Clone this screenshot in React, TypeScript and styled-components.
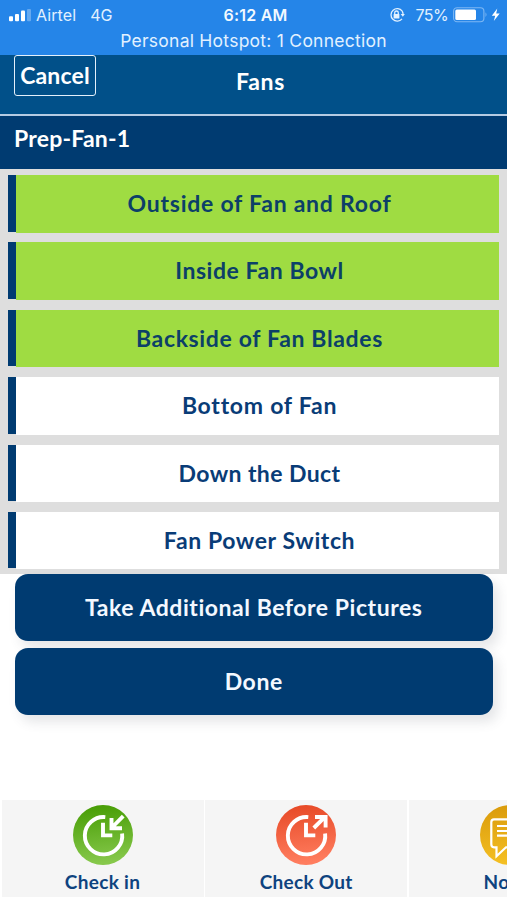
import React from "react";
import styled, { createGlobalStyle } from "styled-components";

const NAVY = "#003b71";

const GlobalStyle = createGlobalStyle`
  * { box-sizing: border-box; }
  html, body { margin: 0; background: #fff; overflow: hidden; }
`;

const Screen = styled.div`
  width: 507px;
  height: 900px;
  overflow: hidden;
  display: flex;
  flex-direction: column;
  background: #fff;
  font-family: Lato, "Open Sans", sans-serif;
  font-weight: 700;
`;

const StatusBar = styled.div`
  height: 54.5px;
  flex: none;
  background: #2585e8;
  color: #e2f1ff;
  font-family: Inter, "Liberation Sans", sans-serif;
  font-weight: 400;
  white-space: nowrap;
`;

const StatusRow = styled.div`
  height: 30px;
  display: grid;
  grid-template-columns: 1fr auto 1fr;
  align-items: center;
  padding: 0 5px 0 9px;
  font-size: 16px;
  line-height: 20px;
`;

const Carrier = styled.div`
  display: flex;
  align-items: center;
`;

const CarrierName = styled.span`
  margin: 0 14px 0 5px;
  letter-spacing: 0.1px;
`;

const Clock = styled.div`
  font-weight: 600;
  color: #f2f9ff;
  letter-spacing: 0.2px;
`;

const Power = styled.div`
  display: flex;
  align-items: center;
  justify-content: flex-end;
`;

const Percent = styled.span`
  margin: 0 5px 0 10px;
  letter-spacing: -0.6px;
`;

const Hotspot = styled.div`
  height: 22px;
  line-height: 22px;
  text-align: center;
  font-size: 17.5px;
  letter-spacing: 0.25px;
`;

const Header = styled.header`
  height: 61.5px;
  flex: none;
  display: grid;
  grid-template-columns: 1fr auto 1fr;
  align-items: start;
  padding: 0 0 0 14px;
  background: #015089;
  border-bottom: 2px solid #b5cbe3;
  color: #fff;
`;

const CancelButton = styled.button`
  justify-self: start;
  width: 82px;
  height: 41px;
  padding: 0;
  border: 1.5px solid #e4f0fb;
  border-radius: 3px;
  background: transparent;
  color: inherit;
  font: inherit;
  font-size: 23px;
  line-height: 37px;
  letter-spacing: 0.15px;
`;

const Title = styled.h1`
  margin: 11px 0 0;
  font-size: 23px;
  line-height: 30px;
  letter-spacing: 0.7px;
`;

const Section = styled.h2`
  height: 53px;
  flex: none;
  margin: 0;
  padding: 7px 14px;
  background: ${NAVY};
  color: #fff;
  font-size: 23px;
  line-height: 30px;
  letter-spacing: 0.2px;
`;

const List = styled.div`
  height: 404.5px;
  flex: none;
  display: flex;
  flex-direction: column;
  gap: 9.9px;
  padding: 6px 8px 0;
  background: #dedede;
`;

const Item = styled.div`
  height: 57.5px;
  flex: none;
  display: flex;
`;

const ItemMark = styled.div`
  width: 8px;
  height: 56.5px;
  background: ${NAVY};
`;

const ItemLabel = styled.div<{ $done: boolean; $spacing: number }>`
  flex: 1;
  text-align: center;
  background: ${(p) => (p.$done ? "#9fdc42" : "#fff")};
  color: ${(p) => (p.$done ? "#0c4068" : "#093c77")};
  font-size: 23px;
  line-height: 56px;
  letter-spacing: ${(p) => p.$spacing}px;
  padding-left: 4px;
`;

const Actions = styled.div`
  flex: 1;
  display: flex;
  flex-direction: column;
  gap: 7px;
  padding: 0 14px 0 14.5px;
`;

const ActionButton = styled.button<{ $spacing: number }>`
  height: 67.3px;
  flex: none;
  padding: 0;
  border: 0;
  border-radius: 13px;
  background: ${NAVY};
  color: #f3f8ff;
  box-shadow: 5px 7px 12px rgba(70, 80, 90, 0.14);
  font: inherit;
  font-size: 23px;
  letter-spacing: ${(p) => p.$spacing}px;
`;

const Tabs = styled.nav`
  flex: none;
  display: flex;
  gap: 1.7px;
  padding: 0 0 3px 1.5px;
`;

const Tab = styled.div`
  width: 202px;
  height: 97px;
  flex: none;
  display: flex;
  flex-direction: column;
  align-items: center;
  padding-top: 5px;
  background: #f5f5f5;
  color: #0e437f;
`;

const TabLabel = styled.span<{ $spacing: number }>`
  margin-top: 5px;
  font-size: 19px;
  line-height: 24px;
  letter-spacing: ${(p) => p.$spacing}px;
`;

type Shape = "in" | "out" | "note";
const badgeColors: Record<Shape, [string, string]> = {
  in: ["#459b02", "#86c84b"],
  out: ["#e64825", "#ff7d5f"],
  note: ["#d99a0b", "#f4bf23"],
};

function Badge({ shape }: { shape: Shape }) {
  const [from, to] = badgeColors[shape];
  return (
    <svg width="60" height="60" viewBox="0 0 60 60" fill="none">
      <defs>
        <linearGradient id={`fill-${shape}`} x1="0" y1="0" x2="0.1" y2="1">
          <stop stopColor={from} />
          <stop offset="1" stopColor={to} />
        </linearGradient>
      </defs>
      <circle cx="30" cy="30" r="30" fill={`url(#fill-${shape})`} />
      {shape === "note" ? (
        <g stroke="#fff" strokeWidth="2.2">
          <path d="M14 14.3h34q3 0 3 3v22q0 3-3 3H26l-9.5 9v-9H14q-2.7 0-2.7-3v-22q0-3 2.7-3z" />
          <path d="M17 21h27M17 26h27M17 30.7h27" />
        </g>
      ) : (
        <g stroke="#fff" strokeWidth="3.9">
          <path d="M32.3 12.1A18.7 18.7 0 1 0 49.1 28.4" />
          <path d="M30 17.8v12.6h9.3" />
          {shape === "in" ? (
            <path d="M50.2 11.2 39 22.5M38.5 13v10.2H49" />
          ) : (
            <path d="M37.8 23 49 11.8M39 12h10.6v10.6" />
          )}
        </g>
      )}
    </svg>
  );
}

const items = [
  { label: "Outside of Fan and Roof", done: true, spacing: 0.75 },
  { label: "Inside Fan Bowl", done: true, spacing: 0.55 },
  { label: "Backside of Fan Blades", done: true, spacing: 0.65 },
  { label: "Bottom of Fan", done: false, spacing: 0.75 },
  { label: "Down the Duct", done: false, spacing: 0.4 },
  { label: "Fan Power Switch", done: false, spacing: 0.6 },
];

const tabs: { label: string; shape: Shape; spacing: number }[] = [
  { label: "Check in", shape: "in", spacing: 0.3 },
  { label: "Check Out", shape: "out", spacing: 0.3 },
  { label: "Notes", shape: "note", spacing: 0.4 },
];

function Signal() {
  return (
    <svg width="22" height="13" viewBox="0 0 22 13" fill="#fff">
      <rect x="0" y="7.3" width="4" height="5" rx="1" />
      <rect x="6" y="5" width="4" height="7.3" rx="1" />
      <rect x="12" y="1.5" width="4" height="10.8" rx="1" />
      <rect x="18" y="0" width="4" height="12.3" rx="1" opacity=".3" />
    </svg>
  );
}

function RotationLock() {
  return (
    <svg width="16" height="16" viewBox="0 0 16 16" fill="none" stroke="#e2f1ff" strokeWidth="1.3">
      <path d="M13.2 4.2A6.2 6.2 0 1 0 13 11.8" />
      <path d="M13.2 4.2q1 1.7.9 3.8" />
      <path d="M11.7 7h4.2l-2.1 2.7z" fill="#e2f1ff" stroke="none" />
      <rect x="4.6" y="7" width="5.8" height="4.4" rx=".5" fill="#e2f1ff" stroke="none" />
      <path d="M5.7 7.3V5.8a1.8 1.8 0 0 1 3.6 0v1.5" />
    </svg>
  );
}

function Battery() {
  return (
    <svg width="49" height="16" viewBox="0 0 49 16">
      <rect x=".6" y=".7" width="30.3" height="14" rx="3.5" fill="none" stroke="#7db7f3" strokeWidth="1.1" />
      <rect x="2.3" y="2.4" width="20.7" height="10.6" rx="1.5" fill="#fff" />
      <path d="M32.5 5.3q2 2.4 0 4.8z" fill="#7db7f3" />
      <path d="M44.3 1.5 38.8 8.7h3.4L40.8 14l5.9-7.4h-3.5z" fill="#fff" />
    </svg>
  );
}

export default function App() {
  return (
    <Screen>
      <GlobalStyle />
      <StatusBar>
        <StatusRow>
          <Carrier>
            <Signal />
            <CarrierName>Airtel</CarrierName>
            <span>4G</span>
          </Carrier>
          <Clock>6:12 AM</Clock>
          <Power>
            <RotationLock />
            <Percent>75%</Percent>
            <Battery />
          </Power>
        </StatusRow>
        <Hotspot>Personal Hotspot: 1 Connection</Hotspot>
      </StatusBar>
      <Header>
        <CancelButton>Cancel</CancelButton>
        <Title>Fans</Title>
      </Header>
      <Section>Prep-Fan-1</Section>
      <List>
        {items.map((item) => (
          <Item key={item.label}>
            <ItemMark />
            <ItemLabel $done={item.done} $spacing={item.spacing}>
              {item.label}
            </ItemLabel>
          </Item>
        ))}
      </List>
      <Actions>
        <ActionButton $spacing={0.54}>Take Additional Before Pictures</ActionButton>
        <ActionButton $spacing={0.6}>Done</ActionButton>
      </Actions>
      <Tabs>
        {tabs.map((tab) => (
          <Tab key={tab.label}>
            <Badge shape={tab.shape} />
            <TabLabel $spacing={tab.spacing}>{tab.label}</TabLabel>
          </Tab>
        ))}
      </Tabs>
    </Screen>
  );
}
